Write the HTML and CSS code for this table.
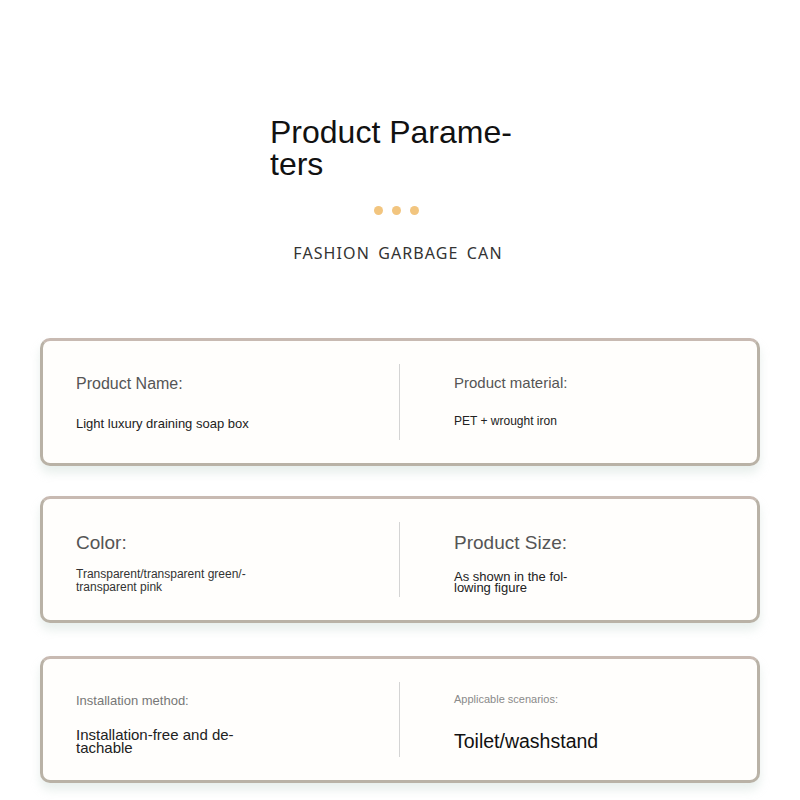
FILE: index.html
```html
<!DOCTYPE html>
<html lang="en">
<head>
<meta charset="utf-8">
<link rel="stylesheet" href="styles.css">
</head>
<body>
<div class="page">
  <header class="head">
    <h1 class="title">Product Parame-<br>ters</h1>
    <div class="dots"><span></span><span></span><span></span></div>
    <p class="subtitle">FASHION GARBAGE CAN</p>
  </header>

  <section class="cards">
    <div class="card c1">
      <div class="col left">
        <div class="label">Product Name:</div>
        <div class="value">Light luxury draining soap box</div>
      </div>
      <div class="divider"></div>
      <div class="col right">
        <div class="label">Product material:</div>
        <div class="value">PET + wrought iron</div>
      </div>
    </div>

    <div class="card c2">
      <div class="col left">
        <div class="label">Color:</div>
        <div class="value">Transparent/transparent green/-<br>transparent pink</div>
      </div>
      <div class="divider"></div>
      <div class="col right">
        <div class="label">Product Size:</div>
        <div class="value">As shown in the fol-<br>lowing figure</div>
      </div>
    </div>

    <div class="card c3">
      <div class="col left">
        <div class="label">Installation method:</div>
        <div class="value">Installation-free and de-<br>tachable</div>
      </div>
      <div class="divider"></div>
      <div class="col right">
        <div class="label">Applicable scenarios:</div>
        <div class="value">Toilet/washstand</div>
      </div>
    </div>
  </section>
</div>
</body>
</html>
```

FILE: styles.css
```css
* { box-sizing: border-box; }
html, body {
  margin: 0;
  padding: 0;
  background: #ffffff;
}
body {
  font-family: "Liberation Sans", Arial, sans-serif;
  color: #222;
}
.page {
  width: 800px;
  height: 800px;
  overflow: hidden;
}
.head {
  padding-top: 116px;
  display: flex;
  flex-direction: column;
  align-items: center;
}
.title {
  margin: 0;
  width: 260px;
  font-weight: normal;
  font-size: 32px;
  line-height: 32px;
  color: #111;
}
.dots {
  margin-top: 26px;
  display: flex;
  gap: 9px;
  margin-left: -8px;
}
.dots span {
  width: 9px;
  height: 9px;
  border-radius: 50%;
  background: #f2c57f;
}
.subtitle {
  margin: 28px 0 0 -4px;
  font-family: "Noto Sans", "Open Sans", sans-serif;
  font-size: 16px;
  line-height: 20px;
  letter-spacing: 1.1px;
  word-spacing: 3px;
  color: #333;
}
.cards {
  padding: 0 40px;
  margin-top: 75px;
}
.card {
  height: 128px;
  border: 3px solid #b9b2a6;
  border-top-color: #c8bab2;
  border-radius: 10px;
  background: #fffefc;
  box-shadow: 0 7px 10px rgba(190, 210, 200, 0.35);
  display: flex;
  align-items: stretch;
  padding: 23px 0;
}
.card + .card { margin-top: 30px; }
.card.c3 { margin-top: 33px; }
.card.c2, .card.c3 { height: 127px; }
.col {
  display: flex;
  flex-direction: column;
}
.col.left { width: 356px; padding-left: 33px; }
.col.right { flex: 1; padding-left: 54px; }
.divider {
  width: 1px;
  background: #d4d4d4;
}
.label { color: #555; }
.value { color: #222; }

/* card 1 */
.c1 .left .label { margin-top: 10px; font-size: 16px; line-height: 20px; }
.c1 .left .value { margin-top: 22px; font-size: 13px; line-height: 16px; }
.c1 .right .label { margin-top: 10px; font-size: 15px; line-height: 18px; }
.c1 .right .value { margin-top: 22px; font-size: 12px; line-height: 15px; }

/* card 2 */
.c2 .left .label { margin-top: 10px; font-size: 19px; line-height: 22px; }
.c2 .left .value { margin-top: 14px; font-size: 12px; line-height: 13px; color: #333; }
.c2 .right .label { margin-top: 10px; font-size: 19px; line-height: 22px; }
.c2 .right .value { margin-top: 17px; font-size: 13px; line-height: 11px; }

/* card 3 */
.c3 .left .label { margin-top: 11px; font-size: 13px; line-height: 16px; color: #777; }
.c3 .left .value { margin-top: 19px; font-size: 15px; line-height: 13px; }
.c3 .right .label { margin-top: 10px; font-size: 11px; line-height: 14px; color: #8a8a8a; }
.c3 .right .value { margin-top: 24px; font-size: 19.5px; line-height: 22px; color: #111; }
```
